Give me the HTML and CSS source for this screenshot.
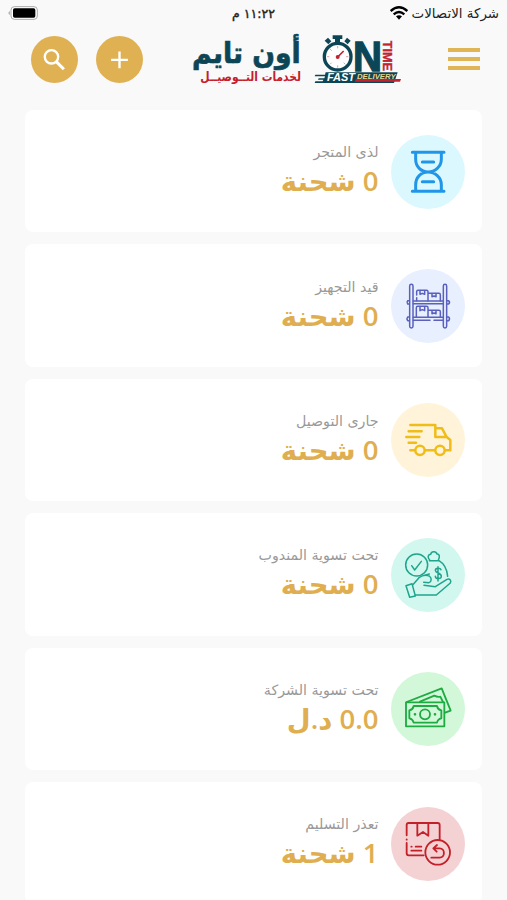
FILE: index.html
```
<!DOCTYPE html>
<html lang="ar" dir="rtl">
<head>
    <meta charset="UTF-8">
    <meta name="viewport" content="width=device-width, initial-scale=1.0">
    <title>أون تايم</title>
    <link rel="stylesheet" href="styles.css">
</head>
<body>
    <!-- Status bar -->
    <div class="status">
        <div class="carrier">
            <span>شركة الاتصالات</span>
            <svg class="wifi" viewBox="0 0 54 42" fill="none" stroke="#000" stroke-width="7">
                <path d="M2 15Q27-7 52 15M11 25Q27 11 43 25"/>
                <path d="M18 31Q27 24 36 31L27 41Z" fill="#000" stroke="none"/>
            </svg>
        </div>
        <span class="time">١١:٢٢ م</span>
        <svg class="battery" viewBox="0 0 90 42">
            <rect x="9" y="2" width="79" height="38" rx="10" fill="#fff" stroke="#aaa" stroke-width="3"/>
            <rect x="15" y="7" width="67" height="28" rx="5"/>
            <path d="M5 15Q-2 21 5 27Z" fill="#999"/>
        </svg>
    </div>

    <!-- Header -->
    <header class="header">
        <button class="menu" aria-label="القائمة"><i></i><i></i><i></i></button>
        <svg class="logo" viewBox="30 95 636 165" direction="ltr">
            <g class="logo-ar" text-anchor="middle">
                <text class="name" x="199" y="189" textLength="326" lengthAdjust="spacingAndGlyphs">أون تايم</text>
                <text class="slogan" x="212" y="243" textLength="302" lengthAdjust="spacingAndGlyphs">لخدمات التــوصيــل</text>
            </g>
            <!-- stopwatch -->
            <path d="M458 105h29v11h-7v12h-15v-12h-7zM434 121l10-9 10 11-9 9zM501 112l11 9-9 11-10-9z" fill="#0c4656"/>
            <circle cx="473" cy="169" r="40" fill="#fff" stroke="#0c4656" stroke-width="10"/>
            <path d="M473 137v7M473 195v7M441 169h7M498 169h7M450 146l5 5M496 192l-5-5M450 192l5-5" stroke="#e8a0a0" stroke-width="3"/>
            <path d="M473 170l18-18" stroke="#bf2430" stroke-width="5"/>
            <circle cx="473" cy="170" r="6" fill="#bf2430"/>
            <text class="letter" x="519" y="211" textLength="87" lengthAdjust="spacingAndGlyphs">N</text>
            <text class="word" transform="translate(609 121) rotate(90)" textLength="91" lengthAdjust="spacingAndGlyphs">TIME</text>
            <!-- delivery strip -->
            <path d="M437 216H653L642 248H404l2-5h22l2-5h-16l2-4h17l2-6h-31l2-5h29z" fill="#0c4656"/>
            <path d="M528 236h135l-3 8H525z" fill="#bf2430"/>
            <text class="fast" x="441" y="243" textLength="84" lengthAdjust="spacingAndGlyphs">FAST</text>
            <text class="delivery" x="531" y="235" textLength="116" lengthAdjust="spacingAndGlyphs">DELIVERY</text>
        </svg>
        <div class="actions">
            <button class="round" aria-label="إضافة">
                <svg viewBox="0 0 140 140" fill="none" stroke="#fff" stroke-width="7"><path d="M70 46v50M45 71h50"/></svg>
            </button>
            <button class="round" aria-label="بحث">
                <svg viewBox="0 0 140 140" fill="none" stroke="#fff" stroke-width="7"><circle cx="61" cy="62" r="20"/><path d="M76 77l22 22" stroke-width="9"/></svg>
            </button>
        </div>
    </header>

    <!-- Shipment cards -->
    <main class="cards">
        <section class="card">
            <svg class="icon cyan" viewBox="31 45 222 222">
                <g stroke-width="9">
                    <path d="M95 97h95M95 214h95M105 98v20c0 22 16 38 37 38s40-16 40-38V98M105 213v-19c0-22 16-38 37-38s40 16 40 38v19M125 126h34M125 185h34"/>
                </g>
            </svg>
            <div class="info">
                <span class="label">لذى المتجر</span>
                <strong class="value">0 شحنة</strong>
            </div>
        </section>
        <section class="card">
            <svg class="icon indigo" viewBox="31 42 222 222">
                <g stroke-width="4.5">
                    <rect x="87" y="88" width="10" height="131" rx="5"/>
                    <rect x="188" y="88" width="10" height="131" rx="5"/>
                    <path d="M98 138h89M98 146h89M98 187h89M98 196h50M160 196h27"/>
                    <path d="M86 137h-5q-4 5 0 10h5M199 137h5q5 5 0 10h-5M86 186h-5q-4 5 0 11h5M199 186h5q5 5 0 11h-5"/>
                    <path d="M108 120v-10q0-4 4-4h26q4 0 4 4v28M108 128v9M118 107v11l7-3 7 3v-11M144 115h31q4 0 4 4v19M154 116v9l6-2 6 2v-9"/>
                    <path d="M107 186v-28q0-4 4-4h27q4 0 4 4v28M118 155v12l7-3 7 3v-12M144 166h31q4 0 4 4v16M154 167v9l6-2 6 2v-9"/>
                </g>
            </svg>
            <div class="info">
                <span class="label">قيد التجهيز</span>
                <strong class="value">0 شحنة</strong>
            </div>
        </section>
        <section class="card">
            <svg class="icon yellow" viewBox="31 41 222 222">
                <g stroke-width="7.5">
                    <path d="M89 107h75v36h34M164 117h20l14 26 11 9v31h-15M162 183h-28M103 183H89M84 126h39M77 143h39M84 160h22"/>
                    <circle cx="118" cy="183" r="14"/>
                    <circle cx="178" cy="183" r="14"/>
                </g>
            </svg>
            <div class="info">
                <span class="label">جارى التوصيل</span>
                <strong class="value">0 شحنة</strong>
            </div>
        </section>
        <section class="card">
            <svg class="icon teal" viewBox="31 39 222 222">
                <g stroke-width="4.5">
                    <circle cx="108" cy="120" r="33"/>
                    <path d="M93 122l9 13 20-26"/>
                    <path d="M147 105c-7-8-6-16 3-17 1-9 16-11 19-1 8 0 9 8 4 18M146 107h29c17 10 24 25 26 47"/>
                    <path d="M76 182l18-6 10 37-17 4zM96 180l19-22c8-6 21-9 31-5 8 6 7 17-1 20l-16-1M130 181l34 4 35-22c8-4 14 3 10 11l-42 36h-63M132 151l14-4"/>
                    <path d="M181 134c-2-6-17-6-17 2 0 10 18 6 18 18 0 9-17 9-18 0M172 125v43"/>
                </g>
            </svg>
            <div class="info">
                <span class="label">تحت تسوية المندوب</span>
                <strong class="value">0 شحنة</strong>
            </div>
        </section>
        <section class="card">
            <svg class="icon green" viewBox="31 37 222 222">
                <g stroke-width="5.5">
                    <rect x="76" y="128" width="115" height="72"/>
                    <path d="M99 139h70q2 11 13 13v24q-11 2-13 13H99q-2-11-13-13v-24q11-2 13-13z"/>
                    <circle cx="133" cy="164" r="15"/>
                    <path d="M78 127l105-41 27 67-17 6M118 126l43-18q9 5 18 3l8 16"/>
                    <path d="M103 164h0M163 164h0" stroke-width="8"/>
                </g>
            </svg>
            <div class="info">
                <span class="label">تحت تسوية الشركة</span>
                <strong class="value">0.0 د.ل</strong>
            </div>
        </section>
        <section class="card">
            <svg class="icon red" viewBox="31 80 222 222">
                <g stroke-width="5.5">
                    <path d="M78 165v-31q0-6 6-6h87q6 0 6 6v42M78 177v1M78 188v31q0 6 6 6h45M110 129v37l17-11 16 11v-37M92 199h1M105 199h17M92 211h30"/>
                    <circle cx="171" cy="216" r="37"/>
                    <path d="M152 232h25c17 0 17-28 0-28h-15M169 194l-11 10 10 10"/>
                </g>
            </svg>
            <div class="info">
                <span class="label">تعذر التسليم</span>
                <strong class="value">1 شحنة</strong>
            </div>
        </section>
    </main>
</body>
</html>
```
FILE: styles.css
```
* {
    box-sizing: border-box;
}

body {
    margin: 0;
    height: 900px;
    overflow: hidden;
    font-family: 'DejaVu Sans', sans-serif;
    background-color: #f9f9f9;
    color: #222;
}

.status {
    display: grid;
    grid-template-columns: 1fr auto 1fr;
    align-items: center;
    height: 26px;
    padding: 0 8px;
    font-size: 13.4px;
}

.carrier {
    display: flex;
    align-items: center;
    gap: 4px;
    white-space: nowrap;
}

.wifi {
    width: 18px;
    height: 14px;
}

.time {
    font-size: 12.5px;
    -webkit-text-stroke: 0.4px #222;
}

.battery {
    width: 30px;
    height: 14px;
    justify-self: end;
}

.header {
    display: flex;
    align-items: center;
    height: 66px;
    padding: 0 27px 0 31px;
}

button {
    border: 0;
    padding: 0;
    background: none;
}

.menu {
    display: flex;
    flex-direction: column;
    gap: 5px;
    width: 32px;
}

.menu i {
    height: 4px;
    background: #dfb556;
}

.logo {
    width: 212px;
    height: 55px;
    margin-right: 46px;
}

.logo-ar {
    font-weight: bold;
}

.name {
    font-size: 88px;
    fill: #0c4656;
    stroke: #0c4656;
    stroke-width: 2;
}

.slogan {
    font-size: 38px;
    fill: #c4202c;
}

.letter {
    font: bold 126px 'Liberation Sans', sans-serif;
    fill: #0c4656;
    stroke: #0c4656;
    stroke-width: 4;
}

.word {
    font: bold 38px 'Liberation Sans', sans-serif;
    fill: #bf2430;
    stroke: #bf2430;
    stroke-width: 1;
}

.fast {
    font: italic bold 34px 'Liberation Sans', sans-serif;
    fill: #fff;
}

.delivery {
    font: italic bold 20px 'Liberation Sans', sans-serif;
    fill: #e8d48a;
}

.actions {
    display: flex;
    gap: 18px;
    margin-right: auto;
}

.round {
    width: 47px;
    height: 47px;
    border-radius: 50%;
    background: #dfb153;
}

.round svg {
    display: block;
}

.cards {
    display: flex;
    flex-direction: column;
    gap: 12px;
    padding: 18px 25px 0;
}

.card {
    display: flex;
    align-items: center;
    flex: none;
    gap: 12px;
    height: 122.4px;
    padding: 1px 17.5px 0;
    border-radius: 8px;
    background: #fff;
}

.icon {
    width: 74px;
    height: 74px;
    border-radius: 50%;
    fill: none;
    stroke-linecap: round;
    stroke-linejoin: round;
}

.cyan { background: #dbf8ff; stroke: #2196e8; }
.indigo { background: #e8effe; stroke: #5961bd; }
.yellow { background: #fff3da; stroke: #f0bd18; }
.teal { background: #d1f7ee; stroke: #1fa58e; }
.green { background: #d2f8d9; stroke: #1dab42; }
.red { background: #f4d2d4; stroke: #c4202a; }

.info {
    display: flex;
    flex-direction: column;
    align-items: flex-start;
    padding-bottom: 3px;
}

.label {
    font-size: 14.2px;
    line-height: 22px;
    color: #999;
}

.value {
    font-family: 'Open Sans', 'DejaVu Sans', sans-serif;
    font-size: 27.5px;
    font-weight: 600;
    line-height: 36px;
    color: #dfae50;
}
```
